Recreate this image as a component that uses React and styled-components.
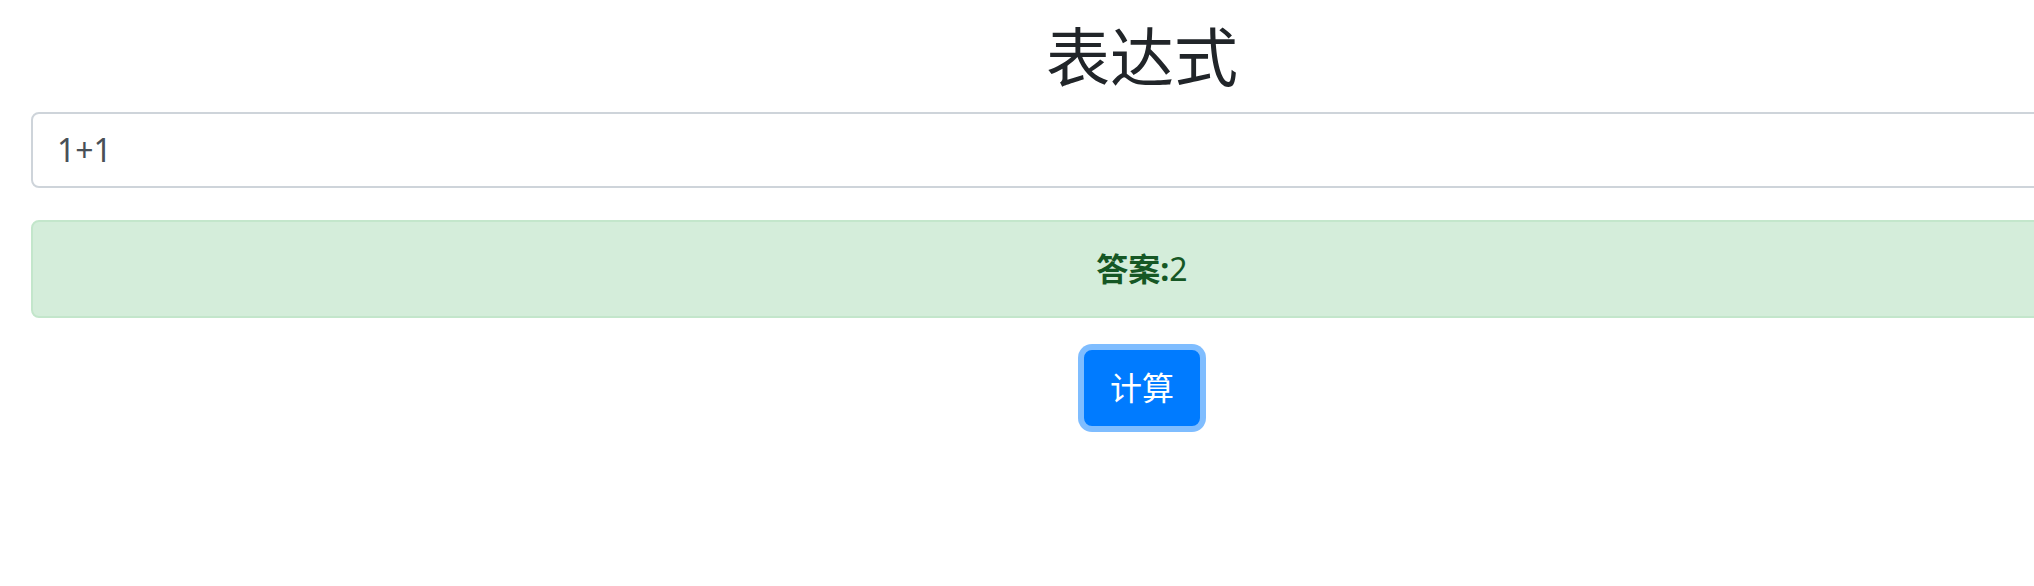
import React, { useState } from "react";
import styled, { createGlobalStyle } from "styled-components";

const GlobalStyle = createGlobalStyle`
  html {
    overflow: hidden;
  }
  html, body {
    margin: 0;
    padding: 0;
    background: #fff;
  }
  body {
    font-family: "Noto Sans", "Noto Sans CJK SC", sans-serif;
    color: #212529;
  }
`;

const Page = styled.div`
  width: 2284px;
  box-sizing: border-box;
  padding: 19px 31px 20px;
`;

const Title = styled.h2`
  margin: 0 0 16px;
  font-size: 64px;
  font-weight: 400;
  line-height: 1.2;
  text-align: center;
  color: #212529;
`;

const Field = styled.input`
  display: block;
  width: 100%;
  box-sizing: border-box;
  height: 76px;
  padding: 12px 24px;
  font-family: inherit;
  font-size: 32px;
  line-height: 1.5;
  color: #495057;
  background: #fff;
  border: 2px solid #ced4da;
  border-radius: 8px;
  outline: none;
  margin-bottom: 32px;
`;

const Alert = styled.div`
  box-sizing: border-box;
  padding: 23px 40px;
  border: 2px solid #c3e6cb;
  border-radius: 8px;
  background: #d4edda;
  color: #155724;
  font-size: 32px;
  line-height: 1.5;
  text-align: center;
  margin-bottom: 32px;

  strong {
    font-weight: 700;
  }
`;

const Actions = styled.div`
  display: flex;
  justify-content: center;
`;

const Button = styled.button`
  font-family: inherit;
  font-size: 32px;
  line-height: 1.5;
  padding: 12px 24px;
  color: #fff;
  background: #007bff;
  border: 2px solid #007bff;
  border-radius: 8px;
  box-shadow: 0 0 0 6px rgba(0, 123, 255, 0.5);
  cursor: pointer;
  outline: none;
`;

export default function App() {
  const [expr, setExpr] = useState("1+1");
  const [answer, setAnswer] = useState("2");

  const calc = () => {
    try {
      // eslint-disable-next-line no-new-func
      setAnswer(String(Function(`return (${expr})`)()));
    } catch (e) {
      setAnswer("错误");
    }
  };

  return (
    <Page>
      <GlobalStyle />
      <Title>表达式</Title>
      <Field value={expr} onChange={(e) => setExpr(e.target.value)} />
      <Alert>
        <strong>答案:</strong>
        {answer}
      </Alert>
      <Actions>
        <Button onClick={calc}>计算</Button>
      </Actions>
    </Page>
  );
}
